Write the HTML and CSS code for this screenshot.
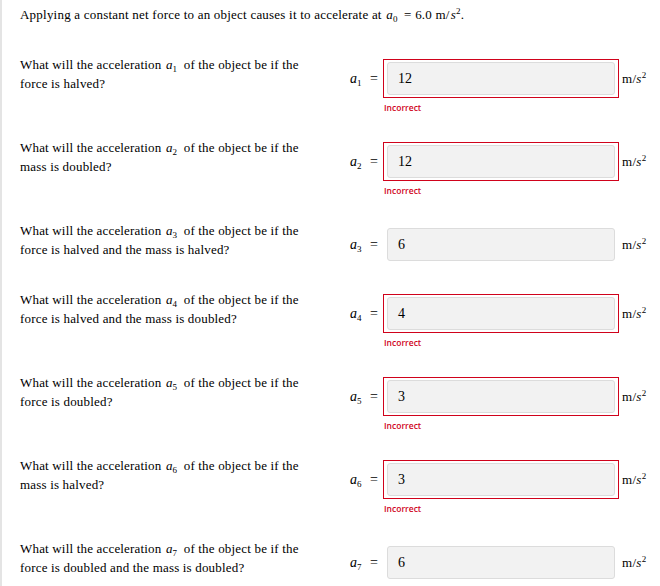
FILE: index.html
```html
<!DOCTYPE html>
<html>
<head>
<meta charset="utf-8">
<link rel="stylesheet" href="styles.css">
</head>
<body>
<div class="page">
  <p class="intro">Applying a constant net force to an object causes it to accelerate at <span class="math"><i>a</i><sub>0</sub> = 6.0 m/<i>s</i><sup>2</sup></span>.</p>

  <div class="rows">
    <div class="row">
      <p class="question">What will the acceleration <span class="var"><i>a</i><sub>1</sub></span> of the object be if the force is halved?</p>
      <div class="answer">
        <div class="line">
          <span class="label"><i>a</i><sub>1</sub> =</span>
          <div class="field wrong"><div class="input">12</div></div>
          <span class="unit">m/<i>s</i><sup>2</sup></span>
        </div>
        <div class="feedback">Incorrect</div>
      </div>
    </div>

    <div class="row">
      <p class="question">What will the acceleration <span class="var"><i>a</i><sub>2</sub></span> of the object be if the mass is doubled?</p>
      <div class="answer">
        <div class="line">
          <span class="label"><i>a</i><sub>2</sub> =</span>
          <div class="field wrong"><div class="input">12</div></div>
          <span class="unit">m/<i>s</i><sup>2</sup></span>
        </div>
        <div class="feedback">Incorrect</div>
      </div>
    </div>

    <div class="row">
      <p class="question">What will the acceleration <span class="var"><i>a</i><sub>3</sub></span> of the object be if the force is halved and the mass is halved?</p>
      <div class="answer">
        <div class="line">
          <span class="label"><i>a</i><sub>3</sub> =</span>
          <div class="field"><div class="input">6</div></div>
          <span class="unit">m/<i>s</i><sup>2</sup></span>
        </div>
      </div>
    </div>

    <div class="row">
      <p class="question">What will the acceleration <span class="var"><i>a</i><sub>4</sub></span> of the object be if the force is halved and the mass is doubled?</p>
      <div class="answer">
        <div class="line">
          <span class="label"><i>a</i><sub>4</sub> =</span>
          <div class="field wrong"><div class="input">4</div></div>
          <span class="unit">m/<i>s</i><sup>2</sup></span>
        </div>
        <div class="feedback">Incorrect</div>
      </div>
    </div>

    <div class="row">
      <p class="question">What will the acceleration <span class="var"><i>a</i><sub>5</sub></span> of the object be if the force is doubled?</p>
      <div class="answer">
        <div class="line">
          <span class="label"><i>a</i><sub>5</sub> =</span>
          <div class="field wrong"><div class="input">3</div></div>
          <span class="unit">m/<i>s</i><sup>2</sup></span>
        </div>
        <div class="feedback">Incorrect</div>
      </div>
    </div>

    <div class="row">
      <p class="question">What will the acceleration <span class="var"><i>a</i><sub>6</sub></span> of the object be if the mass is halved?</p>
      <div class="answer">
        <div class="line">
          <span class="label"><i>a</i><sub>6</sub> =</span>
          <div class="field wrong"><div class="input">3</div></div>
          <span class="unit">m/<i>s</i><sup>2</sup></span>
        </div>
        <div class="feedback">Incorrect</div>
      </div>
    </div>

    <div class="row">
      <p class="question">What will the acceleration <span class="var"><i>a</i><sub>7</sub></span> of the object be if the force is doubled and the mass is doubled?</p>
      <div class="answer">
        <div class="line">
          <span class="label"><i>a</i><sub>7</sub> =</span>
          <div class="field"><div class="input">6</div></div>
          <span class="unit">m/<i>s</i><sup>2</sup></span>
        </div>
      </div>
    </div>
  </div>
</div>
</body>
</html>
```

FILE: styles.css
```css
html, body {
  margin: 0;
  padding: 0;
  background: #fff;
}

body {
  font-family: "Liberation Serif", "Times New Roman", serif;
  font-size: 13px;
  color: #000;
}

.page {
  border-left: 2px solid #e4e4e4;
  min-height: 586px;
  padding: 5px 0 0 18px;
  box-sizing: border-box;
}

p {
  margin: 0;
}

.intro {
  line-height: 19px;
  white-space: nowrap;
  letter-spacing: 0.22px;
}

.math i, .var i, .label i, .unit i {
  font-style: italic;
}

.math i, .var i {
  margin-left: 1px;
}

sub {
  font-size: 9px;
  vertical-align: -3px;
  line-height: 0;
  margin-right: 3px;
}

sup {
  font-size: 9px;
  vertical-align: 5px;
  line-height: 0;
}

.rows {
  display: flex;
  flex-direction: column;
  gap: 26px;
  margin-top: 31px;
}

.row {
  display: flex;
  align-items: flex-start;
}

.question {
  width: 290px;
  line-height: 19px;
  letter-spacing: 0.18px;
}

.answer {
  margin-top: 4px;
  display: flex;
  flex-direction: column;
}

.line {
  display: flex;
  align-items: center;
}

.label {
  width: 73px;
  padding-right: 5px;
  box-sizing: border-box;
  text-align: right;
  white-space: nowrap;
  font-size: 14px;
}

.label sub {
  margin-right: 5px;
}

.field {
  width: 236px;
  height: 39px;
  box-sizing: border-box;
  border: 1px solid transparent;
  padding: 2px 3px 2px 3px;
}

.field.wrong {
  border-color: #d0021b;
}

.input {
  height: 33px;
  box-sizing: border-box;
  background: #f2f2f2;
  border: 1px solid #dcdcdc;
  border-radius: 3px;
  padding-left: 10px;
  font-size: 14px;
  line-height: 31px;
}

.unit {
  margin-left: 3px;
  white-space: nowrap;
  letter-spacing: 0.3px;
}

.feedback {
  margin-left: 74px;
  height: 14px;
  padding-top: 5px;
  box-sizing: border-box;
  font-family: "Open Sans", "Liberation Sans", sans-serif;
  font-weight: 600;
  font-size: 8.5px;
  line-height: 9px;
  color: #d0021b;
}
```
